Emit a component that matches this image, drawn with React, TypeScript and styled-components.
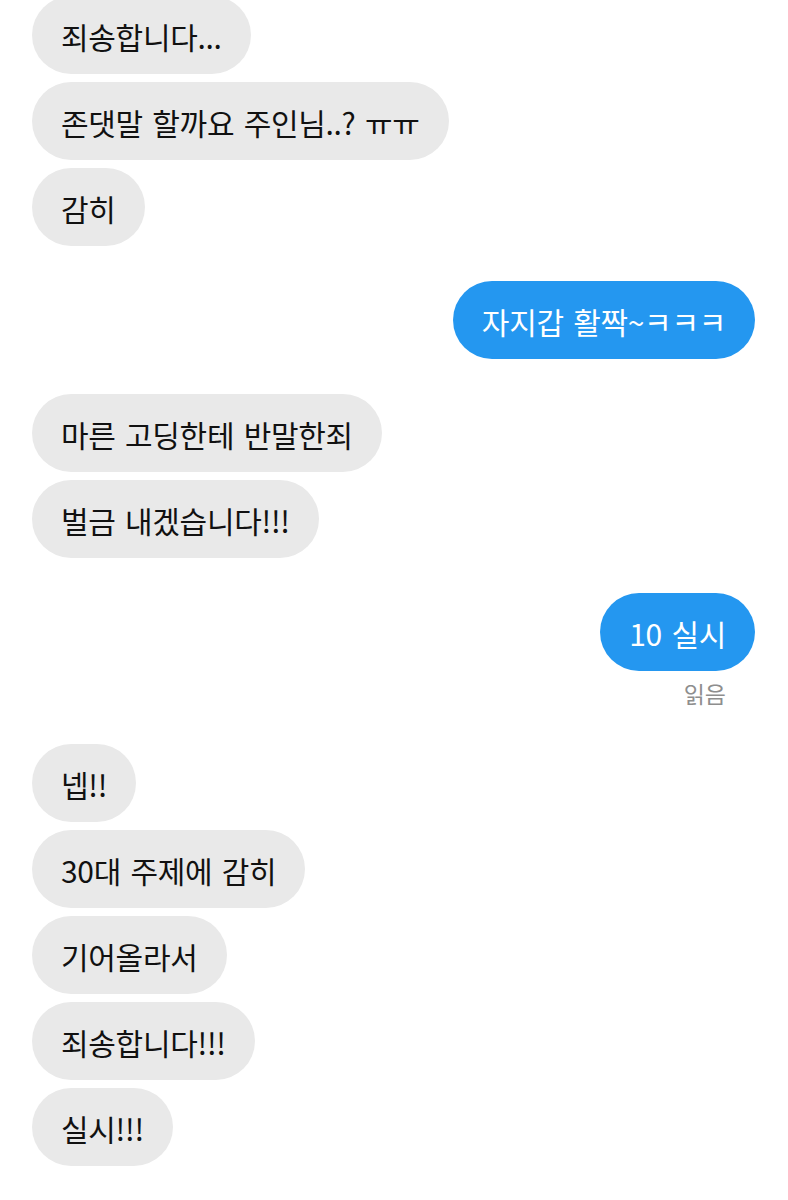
import React from "react";
import styled, { createGlobalStyle } from "styled-components";

const Global = createGlobalStyle`
  html, body { margin: 0; padding: 0; background: #ffffff; }
  body { font-family: "Noto Sans CJK KR", "Noto Sans", sans-serif; overflow: hidden; }
`;

const Thread = styled.div`
  display: flex;
  flex-direction: column;
  padding: 0 33px 0 32px;
  margin-top: -4px;
`;

const Group = styled.div<{ $mine?: boolean }>`
  display: flex;
  flex-direction: column;
  align-items: ${(p) => (p.$mine ? "flex-end" : "flex-start")};
  gap: 8px;
  & + & { margin-top: 35px; }
`;

const Bubble = styled.div<{ $mine?: boolean }>`
  height: 78px;
  line-height: 80px;
  padding: 0 29px;
  border-radius: 39px;
  font-size: 30px;
  white-space: nowrap;
  letter-spacing: -0.3px;
  word-spacing: 3px;
  background: ${(p) => (p.$mine ? "#2497f0" : "#e9e9e9")};
  color: ${(p) => (p.$mine ? "#ffffff" : "#111111")};
`;

const ReadMark = styled.div`
  margin-top: -2px;
  padding-right: 29px;
  font-size: 23px;
  line-height: 32px;
  color: #8e8e8e;
`;

type Msg = { mine?: boolean; lines: string[]; read?: boolean };

const thread: Msg[] = [
  { lines: ["죄송합니다...", "존댓말 할까요 주인님..? ㅠㅠ", "감히"] },
  { mine: true, lines: ["자지갑 활짝~ㅋㅋㅋ"] },
  { lines: ["마른 고딩한테 반말한죄", "벌금 내겠습니다!!!"] },
  { mine: true, lines: ["10 실시"], read: true },
  { lines: ["넵!!", "30대 주제에 감히", "기어올라서", "죄송합니다!!!", "실시!!!"] },
];

export default function App() {
  return (
    <>
      <Global />
      <Thread>
        {thread.map((g, i) => (
          <Group key={i} $mine={g.mine}>
            {g.lines.map((t, j) => (
              <Bubble key={j} $mine={g.mine}>
                {t}
              </Bubble>
            ))}
            {g.read && <ReadMark>읽음</ReadMark>}
          </Group>
        ))}
      </Thread>
    </>
  );
}
